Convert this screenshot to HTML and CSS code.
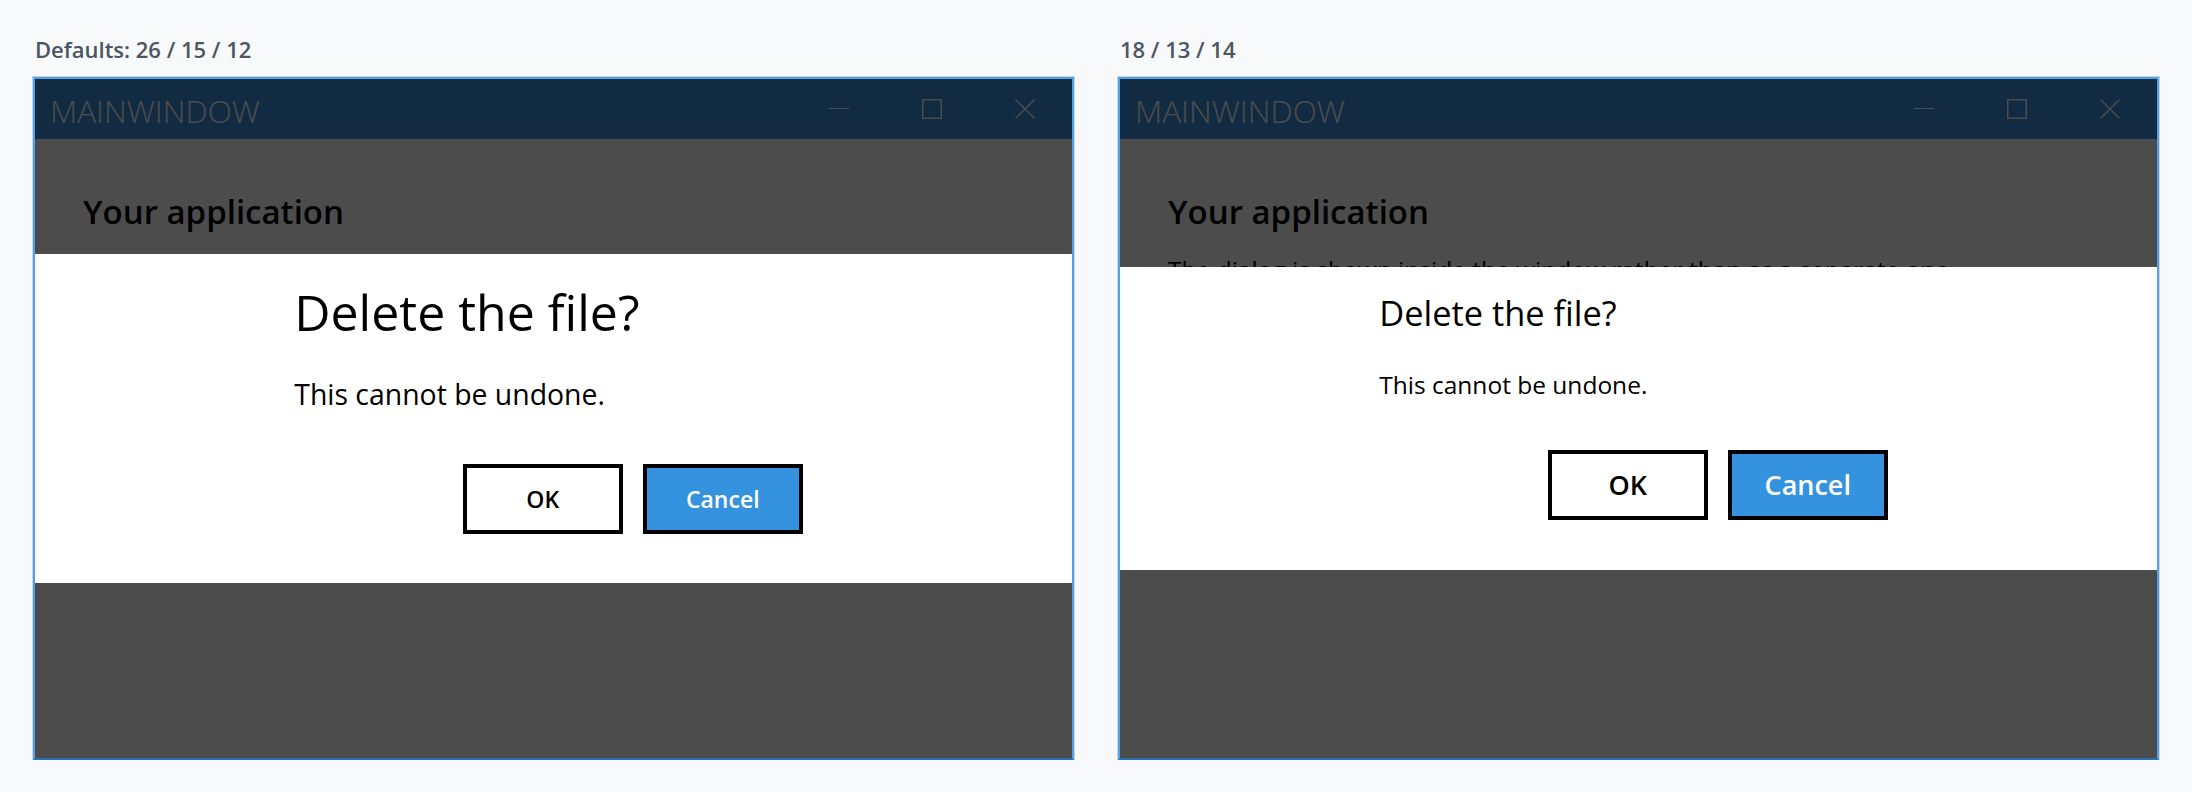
FILE: index.html
```html
<!DOCTYPE html>
<html lang="en">
<head>
<meta charset="utf-8">
<title>Dialog font sizes</title>
<link rel="stylesheet" href="styles.css">
</head>
<body>
<main class="page">
  <section class="demo">
    <h2 class="demo-label">Defaults: 26 / 15 / 12</h2>
    <div class="window">
      <header class="titlebar">
        <span class="titlebar-title">MAINWINDOW</span>
        <div class="caption-buttons">
          <span class="caption-btn"><svg width="20" height="20" viewBox="0 0 20 20"><path d="M0 9.5H20" stroke="#fff" stroke-width="1"/></svg></span>
          <span class="caption-btn"><svg width="20" height="20" viewBox="0 0 20 20"><rect x="0.75" y="0.75" width="18.5" height="18.5" fill="none" stroke="#fff" stroke-width="1.5"/></svg></span>
          <span class="caption-btn"><svg width="20" height="20" viewBox="0 0 20 20"><path d="M0.5 0.5L19.5 19.5M19.5 0.5L0.5 19.5" stroke="#fff" stroke-width="1.4"/></svg></span>
        </div>
      </header>
      <div class="app">
        <h1 class="app-title">Your application</h1>
        <p class="app-text">The dialog is shown inside the window rather than as a separate one.</p>
      </div>
      <div class="overlay">
        <div class="dialog dialog--defaults" role="dialog">
          <div class="dialog-inner">
            <h3 class="dialog-title">Delete the file?</h3>
            <p class="dialog-body">This cannot be undone.</p>
            <div class="dialog-actions">
              <button class="btn btn-secondary">OK</button>
              <button class="btn btn-primary">Cancel</button>
            </div>
          </div>
        </div>
      </div>
    </div>
  </section>
  <section class="demo">
    <h2 class="demo-label">18 / 13 / 14</h2>
    <div class="window">
      <header class="titlebar">
        <span class="titlebar-title">MAINWINDOW</span>
        <div class="caption-buttons">
          <span class="caption-btn"><svg width="20" height="20" viewBox="0 0 20 20"><path d="M0 9.5H20" stroke="#fff" stroke-width="1"/></svg></span>
          <span class="caption-btn"><svg width="20" height="20" viewBox="0 0 20 20"><rect x="0.75" y="0.75" width="18.5" height="18.5" fill="none" stroke="#fff" stroke-width="1.5"/></svg></span>
          <span class="caption-btn"><svg width="20" height="20" viewBox="0 0 20 20"><path d="M0.5 0.5L19.5 19.5M19.5 0.5L0.5 19.5" stroke="#fff" stroke-width="1.4"/></svg></span>
        </div>
      </header>
      <div class="app">
        <h1 class="app-title">Your application</h1>
        <p class="app-text">The dialog is shown inside the window rather than as a separate one.</p>
      </div>
      <div class="overlay">
        <div class="dialog dialog--custom" role="dialog">
          <div class="dialog-inner">
            <h3 class="dialog-title">Delete the file?</h3>
            <p class="dialog-body">This cannot be undone.</p>
            <div class="dialog-actions">
              <button class="btn btn-secondary">OK</button>
              <button class="btn btn-primary">Cancel</button>
            </div>
          </div>
        </div>
      </div>
    </div>
  </section>
</main>
</body>
</html>
```

FILE: styles.css
```css
* { box-sizing: border-box; }

html, body {
  margin: 0;
  padding: 0;
}

body {
  background: #f8f9fa;
  font-family: "Open Sans", "Noto Sans", sans-serif;
  color: #000;
}

.page {
  display: grid;
  grid-template-columns: 1fr 1fr;
  column-gap: 42px;
  padding: 34px 32px 0;
}

.demo {
  display: flex;
  flex-direction: column;
}

.demo-label {
  margin: 0 0 13px 3px;
  font-size: 22px;
  font-weight: 600;
  line-height: 30px;
  color: #4b5563;
}

.window {
  position: relative;
  margin: 0 1px;
  height: 683px;
  border: 2px solid #4fa3eb;
  border-bottom-color: #2b70b2;
  box-shadow: 0 0 0 1px #cfd4db;
  background: #fff;
  display: flex;
  flex-direction: column;
  overflow: hidden;
}

.titlebar {
  height: 60px;
  flex: none;
  background: #398fdf;
  display: flex;
  align-items: center;
  justify-content: space-between;
  padding-left: 15px;
}

.titlebar-title {
  font-size: 31.5px;
  font-weight: 300;
  color: #fff;
  padding-top: 2px;
}

.caption-buttons {
  display: flex;
  height: 100%;
  padding-right: 1px;
}

.caption-btn {
  width: 93px;
  height: 100%;
  display: flex;
  align-items: center;
  justify-content: center;
}

.caption-btn svg { display: block; }

.app {
  padding: 51px 48px;
}

.app-title {
  margin: 0;
  font-size: 33px;
  font-weight: 600;
  line-height: 1.362;
}

.app-text {
  margin: 18px 0 0;
  font-size: 24.5px;
  line-height: 1.362;
}

.overlay {
  position: absolute;
  inset: 0;
  background: rgba(0, 0, 0, 0.7);
  display: flex;
  align-items: center;
}

.dialog {
  width: 100%;
  background: #fff;
}

.dialog-inner {
  width: 50%;
  margin-left: 25%;
}

.dialog-title {
  margin: 0;
  font-weight: 400;
  line-height: 1.362;
}

.dialog-body {
  margin: 0;
  line-height: 1.362;
}

.dialog-actions {
  display: flex;
  justify-content: flex-end;
  gap: 20px;
  padding-right: 10px;
}

.btn {
  width: 160px;
  height: 70px;
  border: 4px solid #000;
  font-family: inherit;
  font-weight: 600;
  padding: 0;
  cursor: pointer;
}

.btn-secondary {
  background: #fff;
  color: #000;
}

.btn-primary {
  background: #3592de;
  color: #fff;
}

.dialog--defaults .dialog-inner { padding: 24.5px 0 49px; }
.dialog--defaults .dialog-title { font-size: 50px; }
.dialog--defaults .dialog-body { font-size: 28.4px; margin-top: 29px; }
.dialog--defaults .dialog-actions { margin-top: 50px; }
.dialog--defaults .btn { font-size: 23px; }

.dialog--custom .dialog-inner { padding: 23px 0 50px; }
.dialog--custom .dialog-title { font-size: 34.4px; }
.dialog--custom .dialog-body { font-size: 24.5px; margin-top: 30.5px; }
.dialog--custom .dialog-actions { margin-top: 49px; }
.dialog--custom .btn { font-size: 27px; }
```
